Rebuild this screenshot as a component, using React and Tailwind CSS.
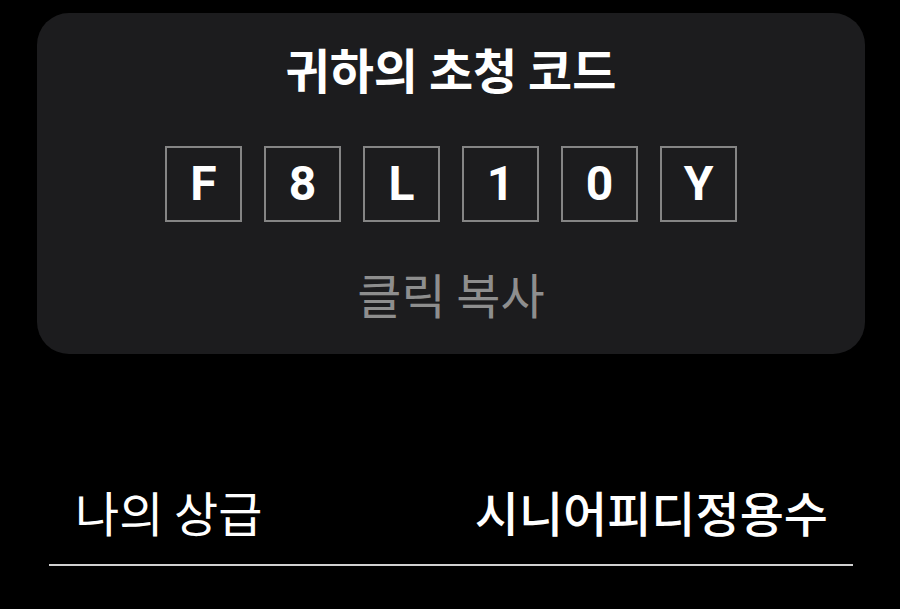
const code = ['F', '8', 'L', '1', '0', 'Y'];

export default function App() {
  return (
    <div
      className="w-[900px] h-[609px] bg-black overflow-hidden pt-[13px]"
      style={{ fontFamily: '"Noto Sans CJK KR", "Noto Sans", sans-serif' }}
    >
      <div className="ml-[37px] w-[828px] h-[341px] rounded-[32px] bg-[#1c1c1e] flex flex-col items-center pt-[31px]">
        <h1 className="text-[48px] leading-none font-semibold text-white">귀하의 초청 코드</h1>
        <div className="mt-[54px] flex gap-[22px]">
          {code.map((c, i) => (
            <div
              key={i}
              className="w-[77px] h-[76px] border-2 border-[#858585] flex items-center justify-center text-white text-[48px] font-bold"
              style={{ fontFamily: 'Roboto, "Liberation Sans", sans-serif' }}
            >
              {c}
            </div>
          ))}
        </div>
        <p className="mt-[47px] text-[48px] leading-none text-[#8e8e8e]">클릭 복사</p>
      </div>
      <div className="ml-[49px] w-[804px] mt-[133px] border-b-2 border-[#d0d0d0]">
        <div className="flex items-center justify-between pl-[26px] pr-[25px] pb-[29px]">
          <span className="text-[48px] leading-none text-white">나의 상급</span>
          <span className="text-[48px] leading-none font-medium text-white">시니어피디정용수</span>
        </div>
      </div>
    </div>
  );
}
